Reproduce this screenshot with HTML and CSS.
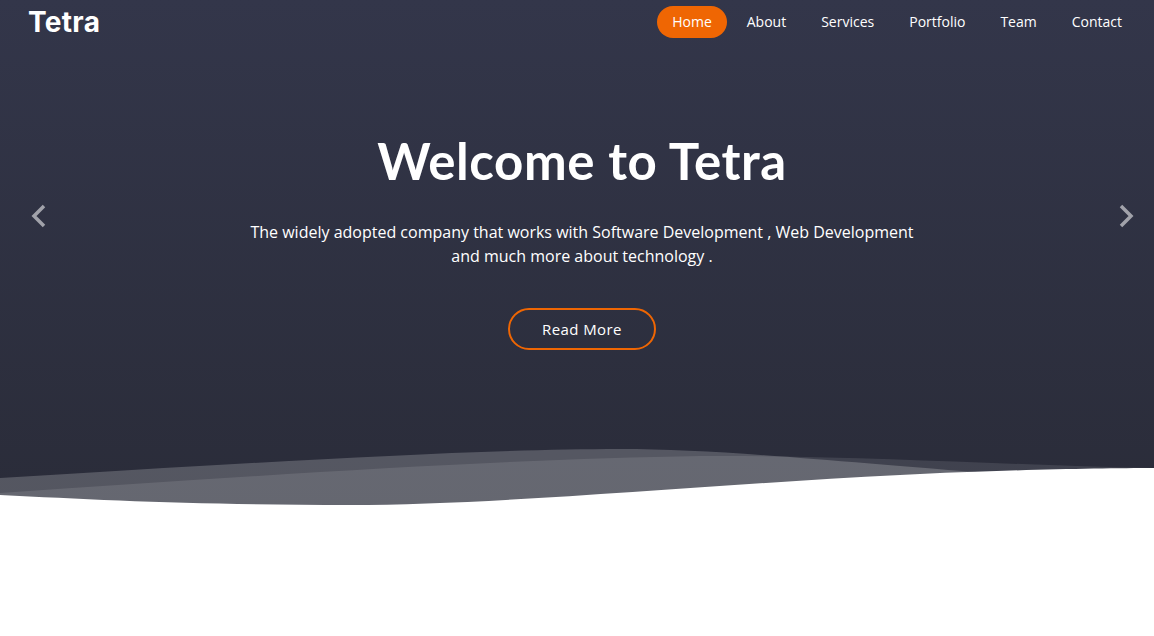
FILE: index.html
```
<!DOCTYPE html>
<html lang="en">
<head>
<meta charset="utf-8">
<title>Tetra</title>
<link rel="stylesheet" href="styles.css">
</head>
<body>
<section class="hero">
  <header class="header">
    <a class="logo" href="#">Tetra</a>
    <nav class="nav">
      <a class="nav-link active" href="#">Home</a>
      <a class="nav-link" href="#">About</a>
      <a class="nav-link" href="#">Services</a>
      <a class="nav-link" href="#">Portfolio</a>
      <a class="nav-link" href="#">Team</a>
      <a class="nav-link" href="#">Contact</a>
    </nav>
  </header>

  <div class="carousel">
    <h2 class="title">Welcome to Tetra</h2>
    <p class="lead">The widely adopted company that works with Software Development , Web Development and much more about technology .</p>
    <a class="btn" href="#">Read More</a>
  </div>

  <a class="arrow arrow-prev" href="#" aria-label="Previous">
    <svg width="16" height="26" viewBox="0 0 16 26"><polyline points="13,3 3,13 13,23" fill="none" stroke="currentColor" stroke-width="3.5" stroke-linecap="butt" stroke-linejoin="miter"/></svg>
  </a>
  <a class="arrow arrow-next" href="#" aria-label="Next">
    <svg width="16" height="26" viewBox="0 0 16 26"><polyline points="3,3 13,13 3,23" fill="none" stroke="currentColor" stroke-width="3.5" stroke-linecap="butt" stroke-linejoin="miter"/></svg>
  </a>

  <svg class="waves" viewBox="0 0 1154 80" preserveAspectRatio="none" aria-hidden="true">
    <path d="M0 48 C250 33 470 19 620 19 C720 19 830 31 1000 44 L1000 80 L0 80 Z" fill="rgba(255,255,255,0.2)"/>
    <path d="M0 63 C250 46 500 29 700 26 C860 25 1000 35 1154 38 L1154 80 L0 80 Z" fill="rgba(255,255,255,0.1)"/>
    <path d="M0 65 C100 70 200 75 350 75 C500 75 700 55 900 45 C1000 40 1100 38 1154 38 L1154 80 L0 80 Z" fill="#ffffff"/>
  </svg>
</section>
</body>
</html>
```

FILE: styles.css
```
* { box-sizing: border-box; }

html, body {
  margin: 0;
  padding: 0;
  background: #ffffff;
  font-family: "Open Sans", "Liberation Sans", sans-serif;
}

a { text-decoration: none; }

.hero {
  position: relative;
  height: 510px;
  display: flex;
  flex-direction: column;
  background: linear-gradient(0deg, #2a2c39 0%, #33364a 100%);
  overflow: hidden;
}

.header {
  height: 44px;
  display: flex;
  align-items: center;
  justify-content: space-between;
  padding: 0 17px 0 28px;
}

.logo {
  font-family: "Inter", "Liberation Sans", sans-serif;
  font-weight: 700;
  font-size: 28px;
  line-height: 1;
  color: #ffffff;
  letter-spacing: 0.3px;
}

.nav {
  display: flex;
  align-items: center;
}

.nav-link {
  display: block;
  margin-left: 5px;
  padding: 7px 15px;
  border-radius: 50px;
  font-size: 14px;
  line-height: 18px;
  color: #ffffff;
}

.nav-link.active {
  background: #ef6603;
}

.carousel {
  flex: 1;
  padding: 86px 0 0 10px;
  display: flex;
  flex-direction: column;
  align-items: center;
  text-align: center;
}

.title {
  margin: 0 0 29px;
  font-family: "Lato", "Liberation Sans", sans-serif;
  font-weight: 700;
  font-size: 51px;
  letter-spacing: 0.6px;
  line-height: 1.2;
  color: #ffffff;
}

.lead {
  margin: 0 0 40px;
  width: 690px;
  font-size: 16px;
  line-height: 24px;
  color: #ffffff;
}

.btn {
  display: inline-block;
  padding: 8px 32px;
  border: 2px solid #ef6603;
  border-radius: 50px;
  font-size: 15px;
  line-height: 22px;
  letter-spacing: 0.4px;
  color: #ffffff;
}

.arrow {
  position: absolute;
  top: 203px;
  color: rgba(255, 255, 255, 0.55);
  display: block;
  line-height: 0;
}

.arrow-prev { left: 31px; }
.arrow-next { left: 1118px; }

.waves {
  display: block;
  width: 100%;
  height: 80px;
  flex: none;
}
```
